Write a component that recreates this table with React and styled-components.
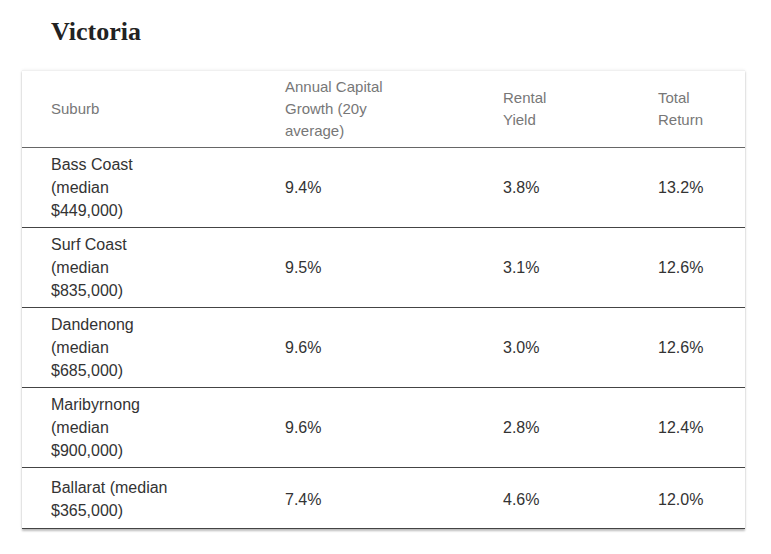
import React from "react";
import styled, { createGlobalStyle } from "styled-components";

const GlobalStyle = createGlobalStyle`
	body {
		margin: 0;
		background: #fff;
		font-family: "Liberation Sans", Arial, sans-serif;
	}
`;

const columns = [
	{ key: "suburb", label: "Suburb", width: 234, padRight: 80 },
	{ key: "growth", label: "Annual Capital Growth (20y average)", width: 218, padRight: 74 },
	{ key: "yield", label: "Rental Yield", width: 155, padRight: 61 },
	{ key: "total", label: "Total Return", width: 116, padRight: 27 },
];

const rows = [
	{ suburb: "Bass Coast (median $449,000)", growth: "9.4%", yield: "3.8%", total: "13.2%" },
	{ suburb: "Surf Coast (median $835,000)", growth: "9.5%", yield: "3.1%", total: "12.6%" },
	{ suburb: "Dandenong (median $685,000)", growth: "9.6%", yield: "3.0%", total: "12.6%" },
	{ suburb: "Maribyrnong (median $900,000)", growth: "9.6%", yield: "2.8%", total: "12.4%" },
	{ suburb: "Ballarat (median $365,000)", growth: "7.4%", yield: "4.6%", total: "12.0%" },
];

function App() {
	return (
		<>
			<GlobalStyle />
			<Page>
				<Title>Victoria</Title>
				<Table>
					<thead>
						<tr>
							{columns.map((c) => (
								<HeadCell key={c.key} $w={c.width} $pr={c.padRight}>
									{c.label}
								</HeadCell>
							))}
						</tr>
					</thead>
					<tbody>
						{rows.map((r, i) => (
							<Row key={i}>
								{columns.map((c) => (
									<Cell key={c.key} $pr={c.padRight}>
										{r[c.key]}
									</Cell>
								))}
							</Row>
						))}
					</tbody>
				</Table>
			</Page>
		</>
	);
}

const Page = styled.div`
	padding: 17px 26px 20px 22px;
`;

const Title = styled.h2`
	margin: 0 0 23px 29px;
	font-family: "Liberation Serif", "Times New Roman", serif;
	font-size: 26px;
	line-height: 30px;
	font-weight: 700;
	color: #222;
`;

const Table = styled.table`
	width: 723px;
	table-layout: fixed;
	border-collapse: collapse;
	box-shadow: 0 0 3px rgba(0, 0, 0, 0.08), 0 2px 2px rgba(0, 0, 0, 0.25);
	border-top: 1px solid #f0f0f0;
`;

const HeadCell = styled.th`
	box-sizing: border-box;
	width: ${(p) => p.$w}px;
	padding: 5px ${(p) => p.$pr}px 5px 29px;
	text-align: left;
	vertical-align: middle;
	font-size: 15px;
	line-height: 22px;
	font-weight: 400;
	color: #777;
	border-bottom: 1px solid #666;
`;

const Row = styled.tr`
	border-bottom: 1px solid #444;
	&:last-child td {
		padding-top: 8px;
		padding-bottom: 6px;
	}
`;

const Cell = styled.td`
	box-sizing: border-box;
	padding: 5px ${(p) => p.$pr}px 5px 29px;
	vertical-align: middle;
	font-size: 16px;
	line-height: 23px;
	color: #333;
`;

export default App;
